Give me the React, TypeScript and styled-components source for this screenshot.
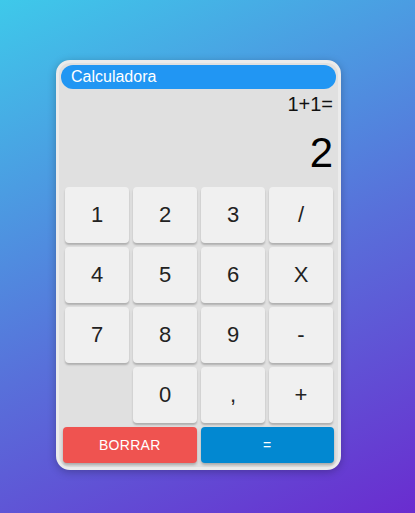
import React from "react";
import styled, { createGlobalStyle } from "styled-components";

const Global = createGlobalStyle`
  html, body { margin: 0; padding: 0; }
  body { font-family: "Liberation Sans", Arial, sans-serif; }
`;

const Page = styled.div`
  min-height: 100vh;
  box-sizing: border-box;
  padding: 60px 0 0 56px;
  background: linear-gradient(155deg, #3ec9ea 0%, #5870da 55%, #6a2ccf 100%);
`;

const Card = styled.div`
  width: 285px;
  box-sizing: border-box;
  border: 3px solid #ebebeb;
  border-radius: 14px;
  background: #e0e0e0;
  padding: 2px 2px 4px;
  box-shadow: 0 2px 8px rgba(0, 0, 0, 0.25);
  display: flex;
  flex-direction: column;
`;

const Header = styled.div`
  height: 24px;
  border-radius: 12px;
  background: #2196f3;
  color: #fff;
  font-size: 16px;
  line-height: 24px;
  padding-left: 10px;
`;

const Expression = styled.div`
  margin-top: 4px;
  padding-right: 3px;
  text-align: right;
  font-size: 20px;
  line-height: 23px;
  color: #111;
`;

const Result = styled.div`
  margin-top: 13px;
  padding-right: 3px;
  text-align: right;
  font-size: 42px;
  line-height: 48px;
  color: #000;
`;

const Keypad = styled.div`
  margin-top: 10px;
  padding: 0 3px 0 4px;
  display: grid;
  grid-template-columns: repeat(4, 64px);
  grid-auto-rows: 56px;
  gap: 4px;
`;

const Key = styled.button`
  border: none;
  border-radius: 4px;
  background: #f0f0f0;
  color: #222;
  font-family: "Liberation Sans", Arial, sans-serif;
  font-size: 22px;
  padding: 0;
  box-shadow: 0 2px 2px rgba(0, 0, 0, 0.22);
  cursor: pointer;
`;

const Empty = styled.div``;

const Actions = styled.div`
  margin-top: 4px;
  padding: 0 2px;
  display: grid;
  grid-template-columns: 1fr 1fr;
  gap: 4px;
`;

const ActionButton = styled.button<{ $bg: string }>`
  height: 36px;
  border: none;
  border-radius: 4px;
  background: ${(p) => p.$bg};
  color: #fff;
  font-family: "Liberation Sans", Arial, sans-serif;
  font-size: 14px;
  letter-spacing: 0.3px;
  box-shadow: 0 2px 3px rgba(0, 0, 0, 0.25);
  cursor: pointer;
`;

const keys: (string | null)[] = [
  "1", "2", "3", "/",
  "4", "5", "6", "X",
  "7", "8", "9", "-",
  null, "0", ",", "+",
];

export default function App() {
  return (
    <>
      <Global />
      <Page>
        <Card>
          <Header>Calculadora</Header>
          <Expression>1+1=</Expression>
          <Result>2</Result>
          <Keypad>
            {keys.map((k, i) =>
              k === null ? <Empty key={i} /> : <Key key={i}>{k}</Key>
            )}
          </Keypad>
          <Actions>
            <ActionButton $bg="#ef5350">BORRAR</ActionButton>
            <ActionButton $bg="#0288d1">=</ActionButton>
          </Actions>
        </Card>
      </Page>
    </>
  );
}
